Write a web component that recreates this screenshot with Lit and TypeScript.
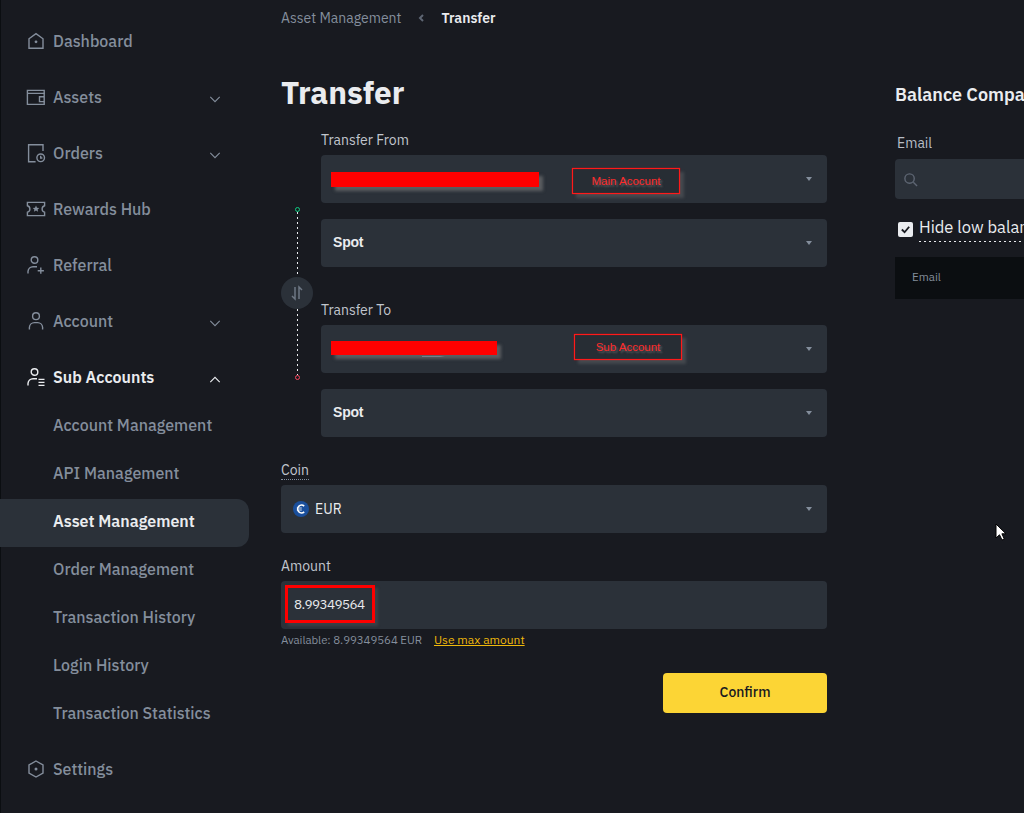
import { LitElement, html, css, svg } from "lit";
import { customElement } from "lit/decorators.js";

const ic = (body: unknown) => html`<svg class="ic" viewBox="0 0 20 20" fill="none" stroke="currentColor" stroke-width="1.400">${body}</svg>`;
const icons: Record<string, unknown> = {
  home: svg`<path d="M3 7.800 10 2.600l7 5.200v9.400H3z"/><circle cx="10" cy="10.800" r="1.400" fill="currentColor" stroke="none"/>`,
  wallet: svg`<path d="M18.200 6.800V3.400H1.400v14h16.800v-3"/><path d="M1.400 6.400h16.800v8.200h-4.700V9.800h4.700"/>`,
  orders: svg`<path d="M17 8V1.800H2.600v17h7"/><circle cx="14.700" cy="14.800" r="3.800"/><path d="M14.700 12.800v2.200h1.700"/>`,
  gift: svg`<path d="M1.400 3.400h17.200v3.400a3.300 3.300 0 0 0 0 6.400v3.400H1.400v-3.400a3.300 3.300 0 0 0 0-6.400z"/><path d="m10 6.600 1 2.200 2.300.2-1.700 1.500.5 2.300-2.100-1.200-2.100 1.200.5-2.300L6.700 9 9 8.800z" fill="currentColor" stroke="none"/>`,
  refer: svg`<circle cx="8.500" cy="5" r="3.300"/><path d="M2 18.400v-2a5 5 0 0 1 5-4.600h4"/><path d="M14.800 12.600v6.200M11.700 15.700h6.200"/>`,
  user: svg`<circle cx="10" cy="5.200" r="3.400"/><path d="M3.400 18.400v-2.200a5 5 0 0 1 5-4.600h3.200a5 5 0 0 1 5 4.600v2.200"/>`,
  subs: svg`<circle cx="8.500" cy="5" r="3.300"/><path d="M2 18.400v-2a5 5 0 0 1 5-4.600h4"/><path d="M12.500 12.400h6M12.500 15.400h6M12.500 18.400h6"/>`,
  settings: svg`<path d="M10 2 17 6v8l-7 4-7-4V6z"/><circle cx="10" cy="10" r="1.500" fill="currentColor" stroke="none"/>`,
};

const chevron = (up = false) => html`<svg class="chev" viewBox="0 0 14 8" fill="none" stroke="currentColor" stroke-width="1.300">
  <path d=${up ? "M1.500 7 7 1.500 12.500 7" : "M1.500 1 7 6.500 12.500 1"}></path></svg>`;
const caret = html`<span class="caret"></span>`;

@customElement("app-root")
export class AppRoot extends LitElement {
  static styles = css`
    :host { display: block; width: 1024px; height: 813px; overflow: hidden; background: #181a20; font-family: "IBM Plex Sans", Inter, "Liberation Sans", sans-serif; color: #eaecef; position: relative; }
    .page { display: flex; height: 813px; }
    .side { width: 249px; flex: none; padding-top: 17px; box-sizing: border-box; border-left: 1px solid #0b0e11; }
    .row { height: 48px; margin-bottom: 8px; display: flex; align-items: center; padding: 0 28px 0 25px; color: #848e9c; font-size: 16px; font-weight: 500; }
    .row .ic { width: 20px; height: 20px; margin-right: 7px; flex: none; }
    .row .chev { width: 12px; height: 7px; margin-left: auto; position: relative; top: 2px; }
    .row.open { color: #eaecef; font-weight: 600; margin-bottom: 2px; }
    .row.last { margin-top: 6px; }
    .sub { height: 48px; box-sizing: border-box; padding: 0 0 4px 52px; display: flex; align-items: center; color: #848e9c; font-size: 16px; font-weight: 500; }
    .sub.active { background: #2b3139; color: #eaecef; font-weight: 600; border-radius: 0 12px 12px 0; margin-left: -1px; padding-left: 53px; }
    .main { width: 546px; flex: none; margin-left: 32px; }
    .crumbs { display: flex; align-items: center; height: 36px; font-size: 14px; color: #848e9c; }
    .crumbs svg { width: 6px; height: 8px; margin: 0 17px 0 17px; color: #5e6673; }
    .crumbs b { color: #eaecef; font-weight: 600; }
    h1 { font-size: 31.500px; line-height: 40px; font-weight: 700; margin: 37px 0 0; }
    .transfer { display: flex; margin-top: 17px; }
    .rail { width: 40px; flex: none; display: flex; flex-direction: column; align-items: flex-start; padding: 77px 0 0; }
    .dot { width: 3px; height: 3px; border-radius: 50%; border: 1px solid #0ecb81; flex: none; margin-left: 14px; }
    .dot.red { border-color: #f6465d; }
    .line { width: 1px; margin-left: 16px; flex: none; background: repeating-linear-gradient(to bottom, #eaecef 0 2px, transparent 2px 5px); }
    .l1 { height: 65px; }
    .l2 { height: 66px; }
    .swap { width: 32px; height: 32px; border-radius: 50%; background: #2b3139; display: flex; align-items: center; justify-content: center; color: #6e7784; flex: none; }
    .swap svg { width: 14px; height: 16px; }
    .fields { flex: 1; }
    label, .lbl { display: block; font-size: 14px; line-height: 20px; color: #c1c6ce; }
    .box { height: 48px; background: #2b3139; border-radius: 4px; display: flex; align-items: center; position: relative; margin-top: 5px; font-size: 14px; }
    .box .caret { position: absolute; right: 15px; top: 22px; width: 0; height: 0; border: 3.500px solid transparent; border-top: 4px solid #848e9c; border-bottom: 0; }
    .gap16 { margin-top: 16px; }
    .to { margin-top: 33px; }
    .spot { box-sizing: border-box; padding: 0 0 2px 12px; font-weight: 700; font-family: "Liberation Sans", sans-serif; font-size: 14px; letter-spacing: -.2px; }
    .redact { background: #ff0000; height: 15px; margin-left: 10px; box-shadow: 4px 4px 3px rgba(130,130,130,.55); flex: none; }
    .r1 { width: 208px; }
    .r2 { width: 166px; height: 14px; margin-bottom: 2px; }
    .ghost { position: absolute; left: 101px; top: 30px; width: 18px; height: 1px; border-bottom: 1px solid #848e9c; border-right: 5px solid transparent; opacity: .7; }
    .tag { width: 108px; height: 26px; box-sizing: border-box; background: #272d34; border: 1px solid #ff1a1a; box-shadow: 4px 4px 3px rgba(130,130,130,.3), inset 0 0 1px #f00, 0 0 1px #f00; color: #ff2b2b; font: 11.500px "Liberation Sans", sans-serif; display: flex; align-items: center; justify-content: center; text-shadow: 2px 2px 2px rgba(130,130,130,.6); flex: none; }
    .t1 { margin-left: 33px; margin-top: 4px; }
    .t2 { margin-left: 77px; margin-bottom: 4px; }
    .coin { margin-top: 25px; }
    .coin .lbl { width: fit-content; border-bottom: 1px dotted #848e9c; line-height: 17px; }
    .coinbox { box-sizing: border-box; padding: 0 0 1px 12px; margin-top: 5px; }
    .euro { width: 16px; height: 16px; margin-right: 6px; flex: none; }
    .amount { margin-top: 23px; }
    .ambox { margin-top: 5px; }
    .mark { margin-left: 4px; margin-bottom: 2px; width: 90px; height: 38px; box-sizing: border-box; border: 3px solid #f00; display: flex; align-items: center; padding-left: 6px; font-size: 13.500px; letter-spacing: -.6px; box-shadow: 3px 3px 3px rgba(130,130,130,.2); }
    .hint { display: flex; font-size: 11.500px; letter-spacing: -.08px; color: #848e9c; height: 20px; align-items: center; }
    .hint a { color: #f0b90b; text-decoration: underline; margin-left: 12px; letter-spacing: 0; font-size: 12px; }
    .actions { display: flex; justify-content: flex-end; margin-top: 24px; }
    .confirm { width: 164px; height: 40px; border: 0; padding: 0 0 3px; border-radius: 4px; background: #fcd535; color: #181a20; font-family: inherit; font-size: 14px; font-weight: 500; }
    .right { width: 300px; flex: none; margin-left: 68px; padding-top: 83px; }
    .right h2 { font-size: 18px; font-weight: 600; margin: 0; line-height: 24px; white-space: nowrap; }
    .right .em { font-size: 14px; color: #b7bdc6; line-height: 20px; margin: 26px 0 0 2px; }
    .search { height: 40px; background: #2b3139; border-radius: 4px; margin-top: 6px; display: flex; align-items: center; padding-left: 8px; color: #5e6673; }
    .search svg { width: 15px; height: 15px; }
    .hide { display: flex; align-items: center; height: 30px; margin-top: 15px; margin-left: 3px; font-size: 16.500px; white-space: nowrap; }
    .check { width: 15px; height: 15px; border-radius: 2px; background: #eaecef; margin-right: 6px; flex: none; display: flex; align-items: center; justify-content: center; color: #181a20; }
    .check svg { width: 11px; height: 11px; }
    .hide .t { display: block; width: 300px; line-height: 20px; padding-bottom: 5px; background: repeating-linear-gradient(to right, #eaecef 0 2px, transparent 2px 5px) left bottom / 100% 1px no-repeat; }
    .thead { background: #0b0e11; box-sizing: border-box; height: 42px; margin-top: 13px; display: flex; align-items: center; padding: 0 0 3px 17px; font-size: 11.500px; color: #848e9c; }
    .cursor { position: absolute; left: 995px; top: 523px; width: 12px; height: 18px; }
  `;

  render() {
    const rows: [string, string, boolean?][] = [
      ["home", "Dashboard"], ["wallet", "Assets", true], ["orders", "Orders", true],
      ["gift", "Rewards Hub"], ["refer", "Referral"], ["user", "Account", true],
    ];
    const subs = ["Account Management", "API Management", "Asset Management", "Order Management", "Transaction History", "Login History", "Transaction Statistics"];
    return html`<div class="page">
      <nav class="side">
        ${rows.map(([i, t, c]) => html`<div class="row">${ic(icons[i])}<span>${t}</span>${c ? chevron() : ""}</div>`)}
        <div class="row open">${ic(icons.subs)}<span>Sub Accounts</span>${chevron(true)}</div>
        ${subs.map((s) => html`<div class="sub ${s === "Asset Management" ? "active" : ""}">${s}</div>`)}
        <div class="row last">${ic(icons.settings)}<span>Settings</span></div>
      </nav>
      <main class="main">
        <div class="crumbs"><span>Asset Management</span>
          <svg viewBox="0 0 6 8" fill="none" stroke="currentColor" stroke-width="2"><path d="M5 1 2 4l3 3"></path></svg>
          <b>Transfer</b></div>
        <h1>Transfer</h1>
        <div class="transfer">
          <div class="rail">
            <span class="dot"></span><span class="line l1"></span>
            <div class="swap"><svg viewBox="0 0 14 16" fill="none" stroke="currentColor" stroke-width="1.500"><path d="M5 2v12L2 11M9 14V2l3 3"></path></svg></div>
            <span class="line l2"></span><span class="dot red"></span>
          </div>
          <div class="fields">
            <label>Transfer From</label>
            <div class="box"><span class="redact r1"></span><span class="tag t1">Main Acocunt</span>${caret}</div>
            <div class="box gap16 spot">Spot${caret}</div>
            <label class="to">Transfer To</label>
            <div class="box"><span class="ghost"></span><span class="redact r2"></span><span class="tag t2">Sub Account</span>${caret}</div>
            <div class="box gap16 spot">Spot${caret}</div>
          </div>
        </div>
        <div class="coin"><div class="lbl">Coin</div>
          <div class="box coinbox"><svg class="euro" viewBox="0 0 16 16" fill="none"><circle cx="8" cy="8" r="8" fill="#1a4f9c"></circle><path d="M11.200 5.100a3.900 3.900 0 1 0 0 5.800" stroke="#fff" stroke-width="1.600"></path><path d="M3.800 7h5M3.800 9h5" stroke="#fff" stroke-width=".8"></path></svg>EUR${caret}</div>
        </div>
        <div class="amount"><div class="lbl">Amount</div>
          <div class="box ambox"><div class="mark">8.99349564</div></div>
        </div>
        <div class="hint"><span>Available: 8.99349564 EUR</span><a>Use max amount</a></div>
        <div class="actions"><button class="confirm">Confirm</button></div>
      </main>
      <aside class="right">
        <h2>Balance Comparison</h2>
        <div class="em">Email</div>
        <div class="search"><svg viewBox="0 0 16 16" fill="none" stroke="currentColor" stroke-width="1.500"><circle cx="7" cy="7" r="5"></circle><path d="m11 11 4 4"></path></svg></div>
        <div class="hide"><span class="check"><svg viewBox="0 0 12 12" fill="none" stroke="currentColor" stroke-width="2"><path d="m2 6 3 3 5-6"></path></svg></span><span class="t">Hide low balance</span></div>
        <div class="thead">Email</div>
      </aside>
    </div>
    <svg class="cursor" viewBox="0 0 12 18"><path d="M1 1v14l3.500-3.200L7 17l2.300-1-2.400-5.200H11z" fill="#fff" stroke="#000"></path></svg>`;
  }
}
